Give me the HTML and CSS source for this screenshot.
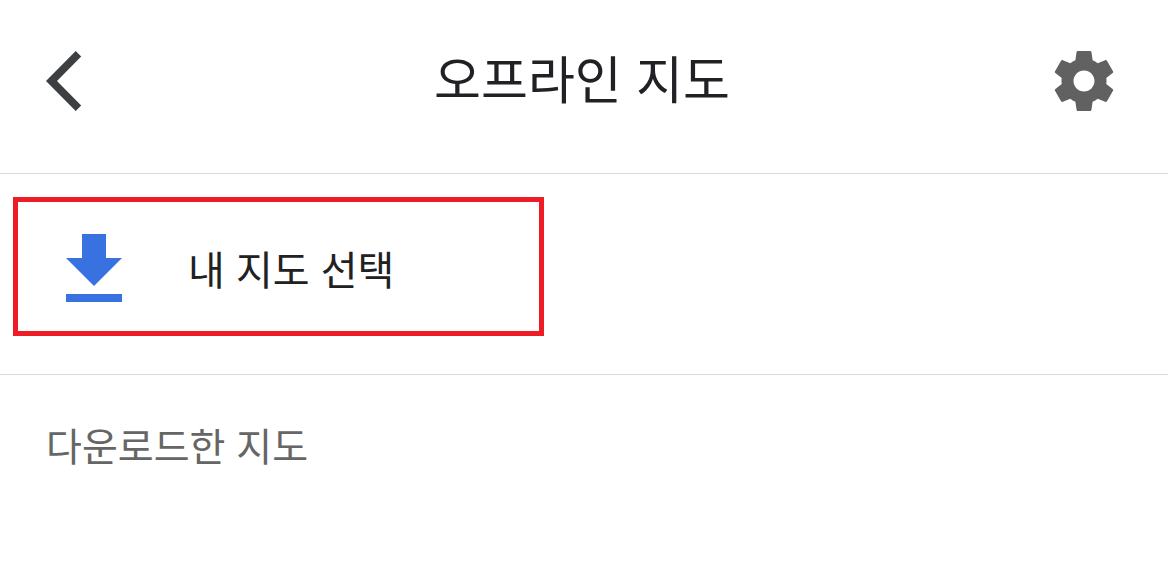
FILE: index.html
```html
<!DOCTYPE html>
<html lang="ko">
<head>
<meta charset="utf-8">
<meta name="viewport" content="width=device-width, initial-scale=1">
<title>오프라인 지도</title>
<link rel="stylesheet" href="styles.css">
</head>
<body>
<div class="screen">
  <header class="app-bar">
    <button class="icon-button" type="button" aria-label="뒤로">
      <svg class="icon-back" viewBox="0 0 36 60" aria-hidden="true"><path d="M29.700 0l5.500 5.500L11 30l24.200 24.500-5.500 5.500L0 30z"/></svg>
    </button>
    <h1 class="title">오프라인 지도</h1>
    <button class="icon-button icon-button-end" type="button" aria-label="설정">
      <svg class="icon-settings" viewBox="2 2 20 20" aria-hidden="true"><path d="M19.43 12.98c.04-.32.07-.64.07-.98s-.03-.66-.07-.98l2.11-1.65c.19-.15.24-.42.12-.64l-2-3.46c-.12-.22-.39-.3-.61-.22l-2.49 1c-.52-.4-1.08-.73-1.69-.98l-.38-2.65C14.46 2.18 14.25 2 14 2h-4c-.25 0-.46.18-.49.42l-.38 2.65c-.61.25-1.17.59-1.69.98l-2.49-1c-.23-.09-.49 0-.61.22l-2 3.46c-.13.22-.07.49.12.64l2.11 1.65c-.04.32-.07.65-.07.98s.03.66.07.98l-2.11 1.65c-.19.15-.24.42-.12.64l2 3.46c.12.22.39.3.61.22l2.49-1c.52.4 1.08.73 1.69.98l.38 2.65c.03.24.24.42.49.42h4c.25 0 .46-.18.49-.42l.38-2.65c.61-.25 1.17-.59 1.69-.98l2.49 1c.23.09.49 0 .61-.22l2-3.46c.12-.22.07-.49-.12-.64l-2.11-1.65zM12 15.5c-1.93 0-3.5-1.57-3.5-3.5s1.57-3.5 3.5-3.5 3.5 1.57 3.5 3.5-1.57 3.5-3.5 3.5z"/></svg>
    </button>
  </header>
  <main>
    <section class="select-section">
      <button class="select-map" type="button">
        <svg class="icon-download" viewBox="0 0 56 68" aria-hidden="true"><path d="M16 0h24v24h16L28 52 0 24h16zM0 60h56v8H0z"/></svg>
        <span>내 지도 선택</span>
      </button>
    </section>
    <section class="downloads">
      <h2 class="section-title">다운로드한 지도</h2>
    </section>
  </main>
</div>
</body>
</html>
```
FILE: styles.css
```css
* {
  box-sizing: border-box;
}

body {
  margin: 0;
  background: #fff;
  color: #202124;
  font-family: "Noto Sans CJK KR", sans-serif;
}

.screen {
  margin-right: 2px;
}

.app-bar {
  display: grid;
  grid-template-columns: 72px 1fr 68px;
  align-items: start;
  padding: 40px 54px 59px 46px;
  border-bottom: 1px solid #dadada;
}

.icon-button {
  display: flex;
  margin-top: 11px;
  padding: 0;
  border: 0;
  background: none;
}

.icon-button-end {
  justify-self: end;
}

.icon-back {
  width: 36px;
  height: 60px;
  fill: #3c4043;
}

.icon-settings {
  width: 60px;
  height: 60px;
  fill: #616161;
}

.title {
  margin: 0;
  font-size: 51px;
  font-weight: 400;
  line-height: 74px;
  text-align: center;
}

.select-section {
  padding: 23px 13px 38px;
  border-bottom: 1px solid #dadada;
}

.select-map {
  display: flex;
  align-items: center;
  gap: 66px;
  width: 100%;
  max-width: 531px;
  padding: 32px 48px 29px;
  border: 5px solid #ee1c25;
  background: none;
  color: #212121;
  font-family: inherit;
  font-size: 40px;
  font-weight: 400;
  line-height: 68px;
}

.icon-download {
  width: 56px;
  height: 68px;
  fill: #3871e0;
}

.downloads {
  padding: 39px 46px;
}

.section-title {
  margin: 0;
  color: #666;
  font-size: 39px;
  font-weight: 400;
  line-height: 60px;
}
```
